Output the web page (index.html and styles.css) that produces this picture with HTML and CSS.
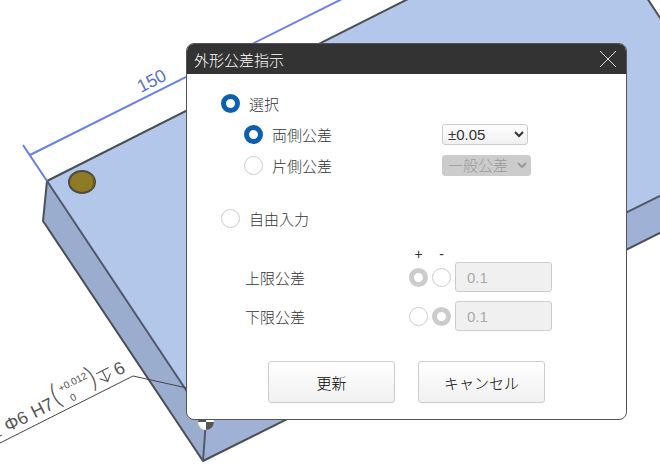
FILE: index.html
```html
<!DOCTYPE html>
<html lang="ja">
<head>
  <meta charset="UTF-8">
  <meta name="viewport" content="width=device-width, initial-scale=1">
  <title>外形公差指示</title>
  <link rel="stylesheet" href="styles.css">
</head>
<body>

<!-- 3Dビュー -->
<svg class="scene" viewBox="0 0 660 471" preserveAspectRatio="xMinYMin slice" aria-hidden="true">
  <!-- プレート -->
  <g class="plate">
    <path class="side-left" d="M47 181 L43 221 L203 461 L206 420 Z"/>
    <path class="side-front" d="M206 420 L203 461 L680 223 L680 186 Z"/>
    <path class="top" d="M47 181 L410 -2 L647 -2 L680 48 L680 186 L206 420 Z"/>
    <path class="edge" d="M47 181 L410 -2 M647 -2 L680 48 M47 181 L43 221 L203 461 L680 223"/>
    <path class="edge thin" d="M47 181 L206 420 L680 186 M206 420 L203 461"/>
  </g>

  <!-- 穴 -->
  <ellipse class="hole" cx="82" cy="182" rx="13" ry="11"/>
  <path class="hole-shade" d="M90 173 Q96 182 90 191 Q95 188 95 182 Q95 177 90 173 Z"/>

  <!-- 原点 -->
  <circle cx="206" cy="422" r="8" fill="#fff"/>
  <path class="origin" d="M206 422 H214 A8 8 0 0 1 206 430 Z M206 422 H198 A8 8 0 0 1 206 414 Z"/>

  <!-- 寸法線 -->
  <path class="dimension" d="M23 145 L47 181 M30 155 L342 -1"/>
  <text class="dimension-text" transform="translate(141 93) rotate(-27)">150</text>

  <!-- 穴の注記 -->
  <path class="leader" d="M0 443 L133 376 L187 388 M0 436 L2 435"/>
  <g class="note" transform="translate(0 443) rotate(-27)">
    <text x="12" y="-6">Φ6</text>
    <text x="42" y="-6">H7</text>
    <text class="paren" x="67" y="-7">(</text>
    <text class="limit" x="77" y="-18">+0.012</text>
    <text class="limit" x="83" y="-4">0</text>
    <text class="paren" x="107" y="-7">)</text>
    <path d="M117 -18 H131 M124 -18 V-6 M118 -12 L124 -6 L130 -12"/>
    <text x="135" y="-6">6</text>
  </g>
</svg>

<form class="dialog" role="dialog" aria-labelledby="title">
  <header class="dialog-header">
    <h1 id="title">外形公差指示</h1>
    <button type="button" class="close" aria-label="閉じる">
      <svg viewBox="0 0 18 18"><path d="M1 1 L17 17 M17 1 L1 17"/></svg>
    </button>
  </header>

  <div class="dialog-body">
    <div class="row">
      <label class="option"><input type="radio" name="mode" checked>選択</label>
    </div>
    <div class="row">
      <label class="option sub"><input type="radio" name="side" checked>両側公差</label>
      <select class="both" aria-label="両側公差の値">
        <option>±0.05</option>
      </select>
    </div>
    <div class="row">
      <label class="option sub"><input type="radio" name="side">片側公差</label>
      <select class="single" aria-label="片側公差の値" disabled>
        <option>一般公差</option>
      </select>
    </div>
    <div class="row free">
      <label class="option"><input type="radio" name="mode">自由入力</label>
    </div>

    <div class="limits">
      <div class="limit-row signs">
        <span></span>
        <span>+</span>
        <span>-</span>
      </div>
      <div class="limit-row">
        <label for="upper">上限公差</label>
        <input type="radio" name="upper-sign" aria-label="上限 +" checked disabled>
        <input type="radio" name="upper-sign" aria-label="上限 -" disabled>
        <input type="text" id="upper" value="0.1" disabled>
      </div>
      <div class="limit-row">
        <label for="lower">下限公差</label>
        <input type="radio" name="lower-sign" aria-label="下限 +" disabled>
        <input type="radio" name="lower-sign" aria-label="下限 -" checked disabled>
        <input type="text" id="lower" value="0.1" disabled>
      </div>
    </div>

    <div class="actions">
      <button type="button">更新</button>
      <button type="button">キャンセル</button>
    </div>
  </div>
</form>

</body>
</html>
```
FILE: styles.css
```css
* {
  box-sizing: border-box;
}

body {
  margin: 0;
  padding: 43px 33px 50px 186px;
  background: #fff;
  color: #333;
  font-family: "Liberation Sans", "Noto Sans CJK JP", sans-serif;
  font-size: 15px;
  font-weight: 300;
}

input, select, button {
  margin: 0;
  font: inherit;
  color: inherit;
}

/* 3Dビュー */
.scene {
  position: absolute;
  inset: 0;
  width: 100%;
  height: 100%;
}

.scene path {
  fill: none;
}

.scene .top { fill: #b3c7eb; }
.scene .side-left { fill: #9badcf; }
.scene .side-front { fill: #9fb1d5; }
.scene .hole-shade { fill: #6b5d1d; }
.scene .origin { fill: #555; }

.edge {
  stroke: #4a4e55;
  stroke-width: 2;
  stroke-linejoin: round;
}

.edge.thin {
  stroke: #50586a;
}

.hole {
  fill: #8f7b25;
  stroke: #4c4a42;
  stroke-width: 2;
}

.dimension {
  stroke: #6681e3;
  stroke-width: 2;
}

.dimension-text {
  fill: #5874cc;
  font-size: 18px;
}

.leader, .note path {
  stroke: #444;
  stroke-width: 1;
}

.note {
  fill: #555;
  font-size: 18px;
}

.note .paren {
  font-family: Lato, "Liberation Sans", sans-serif;
  font-size: 30px;
  font-weight: 300;
}

.note .limit {
  font-size: 10px;
}

/* ダイアログ */
.dialog {
  position: relative;
  border: 1px solid #555;
  border-radius: 8px;
  background: #fff;
  overflow: hidden;
}

.dialog-header {
  display: flex;
  align-items: center;
  justify-content: space-between;
  height: 30px;
  padding: 0 9px 0 7px;
  background: #333;
  color: #fff;
}

.dialog-header h1 {
  margin: 0;
  font-size: 15px;
  font-weight: 300;
}

.close {
  display: flex;
  padding: 0;
  border: 0;
  background: none;
}

.close svg {
  width: 18px;
  height: 18px;
  fill: none;
  stroke: #ddd;
}

.dialog-body {
  padding: 14px 34px 16px;
}

.row {
  display: grid;
  grid-template-columns: 221px 1fr;
  align-items: center;
  height: 31px;
}

.row.free {
  margin-top: 22px;
}

.option {
  display: flex;
  align-items: center;
  gap: 9px;
}

.option.sub {
  padding-left: 23px;
}

input[type="radio"] {
  appearance: none;
  width: 19px;
  height: 19px;
  border: 1px solid #ccc;
  border-radius: 50%;
  background: #fff;
}

input[type="radio"]:checked {
  border: 5px solid #0b5fae;
}

input[type="radio"]:checked:disabled {
  border-color: #ccc;
}

select {
  height: 21px;
  padding: 0 3px 0 1px;
  border: 1px solid #ccc;
  border-radius: 3px;
  background: linear-gradient(#fff, #f0f0f0);
}

select.both { width: 86px; }
select.single { width: 89px; }

select:disabled {
  background: #ccc;
  color: #999;
  opacity: 1;
}

.limits {
  display: grid;
  gap: 9px;
  margin-top: 12px;
  padding-left: 24px;
}

.limit-row {
  display: grid;
  grid-template-columns: 160px 19px 19px 97px;
  align-items: center;
  column-gap: 4px;
}

.limit-row.signs {
  height: 16px;
  margin-bottom: -9px;
  text-align: center;
  font-size: 14px;
}

input[type="text"] {
  width: 97px;
  height: 30px;
  padding: 0 11px;
  border: 1px solid #ccc;
  border-radius: 3px;
  background: #f0f0f0;
  color: #aaa;
}

.actions {
  display: flex;
  justify-content: center;
  gap: 23px;
  margin-top: 30px;
}

.actions button {
  width: 127px;
  height: 42px;
  border: 1px solid #ccc;
  border-radius: 3px;
  background: linear-gradient(#fff, #f0f0f0);
  color: #000;
}
```
